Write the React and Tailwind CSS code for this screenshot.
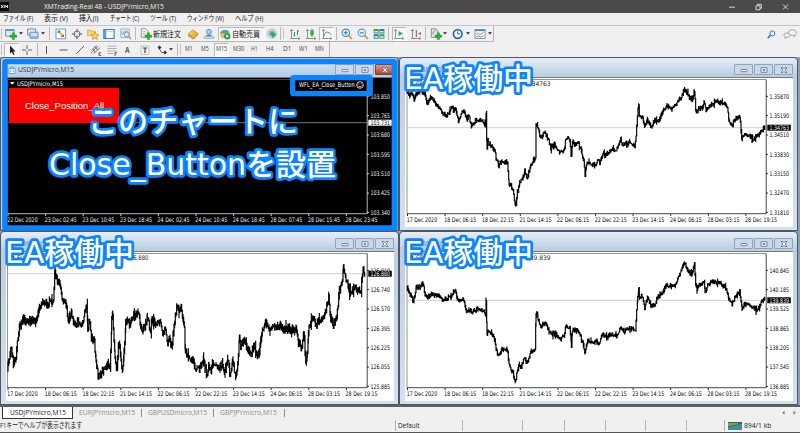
import { useLayoutEffect, useRef, useState } from 'react'

const MENUS = [
  ['ファイル (F)', 30],
  ['表示 (V)', 24],
  ['挿入(I)', 20],
  ['チャート (C)', 29],
  ['ツール (T)', 26],
  ['ウィンドウ (W)', 37],
  ['ヘルプ (H)', 28],
]

const TIMES = [
  '17 Dec 2020', '18 Dec 06:15', '18 Dec 22:15', '21 Dec 14:15', '22 Dec 06:15',
  '22 Dec 22:15', '23 Dec 14:15', '24 Dec 06:15', '28 Dec 03:15', '28 Dec 19:15',
]

const USD_TIMES = [
  '22 Dec 2020', '23 Dec 02:45', '23 Dec 10:45', '23 Dec 18:45', '24 Dec 02:45',
  '24 Dec 10:45', '24 Dec 18:45', '28 Dec 07:45', '28 Dec 15:45', '28 Dec 23:45',
]

/* price curves, in thirds of a pixel */
const GBPUSD = [
  [28,105],[35,118],[42,110],[48,130],[55,112],[65,105],[80,110],[87,145],[97,125],[105,130],[115,148],[125,155],
  [135,172],[150,178],[160,152],[167,165],[173,158],[181,195],[190,170],[200,165],[207,190],[212,175],[220,212],
  [230,195],[245,190],[262,205],[264,168],[266,255],[267,280],[269,250],[275,270],[290,280],[295,310],[302,330],[310,315],
  [328,318],[333,380],[345,400],[352,455],[358,410],[365,380],[375,365],[380,345],[388,370],[398,325],[412,305],
  [414,210],[417,203],[425,235],[430,245],[440,230],[450,250],[458,275],[470,265],[485,293],[500,275],[503,245],
  [515,250],[520,305],[523,255],[530,265],[540,258],[550,285],[557,310],[561,355],[567,320],[575,320],[590,328],
  [600,310],[605,320],[615,290],[625,297],[640,280],[655,282],[668,250],[675,270],[682,260],[690,265],[695,255],
  [710,272],[714,240],[718,180],[722,145],[724,185],[732,180],[740,215],[748,190],[760,213],[770,195],[780,195],
  [785,185],[795,165],[805,150],[820,157],[833,150],[843,130],[850,125],[858,100],[866,110],[875,125],[882,130],
  [889,105],[893,160],[898,170],[902,155],[912,158],[918,140],[925,165],[935,150],[955,137],[965,140],[980,140],
  [988,155],[993,195],[1002,212],[1010,190],[1025,180],[1031,248],[1040,238],[1050,238],[1065,248],[1080,238],
  [1090,225],[1101,212],
]

const GBPJPY = [
  [28,175],[38,195],[46,215],[50,195],[55,170],[65,172],[75,162],[82,195],[88,203],[100,193],[125,198],[133,208],
  [160,200],[170,180],[178,205],[182,213],[188,207],[195,207],[205,240],[218,240],[222,250],[228,240],[245,235],
  [262,250],[264,216],[266,270],[267,310],[275,305],[290,328],[294,355],[302,380],[310,360],[327,355],[333,400],
  [345,430],[352,455],[362,405],[370,410],[378,385],[388,398],[398,368],[411,355],[414,255],[417,245],[420,265],
  [428,290],[435,280],[445,285],[455,310],[475,313],[488,330],[498,315],[503,285],[515,295],[520,345],[523,300],
  [540,300],[550,325],[561,365],[567,335],[600,335],[604,342],[612,312],[630,320],[640,312],[655,318],[668,292],
  [678,305],[690,295],[712,298],[716,240],[719,205],[722,175],[724,205],[732,200],[740,232],[748,205],[758,225],
  [770,225],[778,205],[790,190],[805,165],[820,170],[835,160],[845,135],[852,115],[858,95],[868,120],[880,135],
  [889,105],[893,160],[897,178],[905,160],[912,165],[918,150],[921,188],[930,165],[943,155],[965,160],[985,175],
  [992,205],[1002,222],[1010,205],[1025,185],[1032,235],[1040,222],[1060,230],[1072,238],[1085,230],[1092,212],
  [1101,205],
]

const EURJPY = [
  [24,410],[30,370],[32,350],[40,400],[48,380],[52,340],[58,290],[72,268],[85,275],[95,272],[108,275],[118,235],
  [130,210],[140,220],[160,212],[165,120],[168,145],[180,160],[188,210],[200,225],[205,270],[214,245],[222,285],
  [230,275],[248,280],[260,220],[263,290],[270,280],[275,335],[283,335],[288,390],[295,440],[305,430],[318,405],
  [325,400],[330,410],[335,270],[338,250],[342,330],[345,380],[349,430],[357,330],[367,430],[372,370],[377,280],
  [382,270],[388,290],[395,260],[408,255],[414,240],[425,300],[435,295],[442,260],[450,305],[457,270],[467,280],
  [480,280],[490,305],[497,290],[503,350],[508,320],[515,350],[522,290],[530,225],[537,240],[545,235],[553,290],
  [556,370],[565,380],[575,385],[585,410],[598,415],[602,405],[611,385],[620,440],[627,400],[633,425],[640,395],
  [648,405],[658,415],[666,400],[673,430],[683,385],[690,435],[697,390],[707,442],[713,410],[718,325],[722,345],
  [735,335],[745,360],[755,370],[763,350],[770,375],[778,360],[783,325],[790,290],[797,280],[810,297],[825,295],
  [840,285],[850,300],[865,295],[880,300],[888,295],[895,335],[906,360],[911,300],[917,405],[922,370],[925,310],
  [932,275],[940,268],[948,285],[958,270],[972,260],[980,230],[986,200],[990,260],[1000,285],[1010,260],
  [1018,180],[1027,160],[1030,115],[1040,155],[1047,180],[1065,175],[1083,185],[1087,130],[1090,115],[1096,140],
]

/* one high-low bar every two units, with repeatable jitter */
function bars(points, amp, shift) {
  let seed = 7
  const rnd = () => {
    seed = (seed * 16807) % 2147483647
    return seed / 2147483647
  }
  let d = ''
  let prev = points[0][1]
  for (let i = 0; i < points.length - 1; i++) {
    const [x0, y0] = points[i]
    const [x1, y1] = points[i + 1]
    for (let x = x0; x < x1; x += 2) {
      const y = y0 + ((y1 - y0) * (x - x0)) / (x1 - x0) + (rnd() - 0.5) * amp
      const spike = rnd() > 0.9 ? amp * 0.8 : 0
      const hi = Math.min(prev, y) - rnd() * amp * 0.6 - spike * rnd()
      const lo = Math.max(prev, y) + rnd() * amp * 0.6 + spike * rnd()
      d += `M${(x / 3 + shift).toFixed(2)} ${(hi / 3 - 1).toFixed(2)}V${(lo / 3 - 1).toFixed(2)}`
      prev = y
    }
  }
  return d
}

/* ── Text squeezed to a fixed width ── */

function Fit({ w, className = '', children }) {
  const ref = useRef(null)
  const [scale, setScale] = useState(1)

  useLayoutEffect(() => {
    setScale(w / ref.current.offsetWidth)
  }, [w])

  return (
    <span className={`block shrink-0 whitespace-nowrap leading-none ${className}`} style={{ width: w }}>
      <span ref={ref} className="inline-block origin-left" style={{ transform: `scaleX(${scale})` }}>
        {children}
      </span>
    </span>
  )
}

/* ── Toolbar parts ── */

function Icon({ children, className = '' }) {
  return (
    <svg viewBox="0 0 12 12" className={`h-3 w-3 shrink-0 ${className}`} fill="none">
      {children}
    </svg>
  )
}

function Caret({ className = '' }) {
  return (
    <svg viewBox="0 0 4 3" className={`h-[3px] w-1 shrink-0 ${className}`}>
      <path d="M0 .3h4L2 2.6z" fill="#222" />
    </svg>
  )
}

function Sep({ className = '' }) {
  return <div className={`h-[13px] w-px shrink-0 bg-[#b9b9b9] ${className}`} />
}

function Plus() {
  return <path d="M7.3 4.8h2.2v2.3h2.3v2.2H9.5v2.3H7.3V9.3H5V7.1h2.3z" fill="#22b62c" stroke="#0e8a1c" strokeWidth=".4" />
}

function Axes() {
  return <path d="M2.5 1.5v9h8M1 3l1.5-1.6L4 3M9.2 9l1.6 1.5L9.2 12M1 10.5h1.5" stroke="#777" strokeWidth=".8" />
}

function MainToolbar() {
  return (
    <div className="flex h-[17px] shrink-0 items-center border-t border-[#c4c4c4]">
      <div className="flex h-full w-[494px] items-center border-r border-b border-[#b5b5b5]">
        <div className="ml-px h-[11px] w-px bg-[#c2c2c2]" />
        <Icon className="ml-[3px]">
          <path d="M.6 1.6h8.6v6.6H.6z" fill="#dcebf8" stroke="#5d8fc0" strokeWidth=".9" />
          <path d="M.6 2.2h8.6" stroke="#4c86c4" strokeWidth="1.2" />
          <Plus />
        </Icon>
        <Caret className="ml-[2px]" />
        <Icon className="ml-[4px]">
          <path d="M.7 1h8v6h-8z" fill="#e9f2fa" stroke="#5d8fc0" />
          <path d="M3 4.2h8v6H3z" fill="#cfe2f4" stroke="#5d8fc0" />
          <path d="M3.5 8.2h7v1.6h-7z" fill="#7fadda" />
        </Icon>
        <Caret className="ml-[2px]" />
        <Sep className="ml-[4px]" />
        <Icon className="ml-[5px]">
          <path d="M1 1h9.6v9.8H1z" fill="#fff" stroke="#6fa3cf" strokeWidth="1.1" />
          <path d="M2.7 2.6h2.6v2.6H2.7z" fill="#28a548" />
          <path d="M5 5h2v1.6H5z" fill="#e2a93a" />
          <path d="M6.4 6.5H9v2.6H6.4z" fill="#e2522b" />
        </Icon>
        <Icon className="ml-[4px]">
          <circle cx="6" cy="6" r="3.1" stroke="#666" strokeWidth=".9" />
          <path d="M6 .8v3.7M6 7.5v3.7M.8 6h3.7M7.5 6h3.7" stroke="#555" strokeWidth=".9" />
        </Icon>
        <Icon className="ml-[4px]">
          <path d="M.6 2h3l1 1.2h3.6v4.6H.6z" fill="#f6d575" stroke="#d2a23b" strokeWidth=".7" />
          <path d="M8 4l1.2 2.5 2.7.3-2 1.9.5 2.8L8 10.2l-2.5 1.3.5-2.8-2-1.9 2.7-.3z" fill="#f8cf5c" stroke="#c8922a" strokeWidth=".7" />
        </Icon>
        <Icon className="ml-[4px]">
          <path d="M.8 1.5h10.3v9H.8z" fill="#f5fafe" stroke="#3f7fbf" strokeWidth="1.1" />
          <path d="M1.2 2h2v8h-2z" fill="#4f93d3" />
          <path d="M4.2 3.5h6" stroke="#b7cfe6" strokeWidth=".8" />
        </Icon>
        <Icon className="ml-[5px]">
          <path d="M.7 1h8.6v8.6H.7z" fill="#e6eef6" stroke="#8aabc9" strokeWidth=".8" />
          <path d="M2 7V3.5M3.7 6V3M5.5 5V2.5M7.2 5V2.5" stroke="#7e9fc0" strokeWidth=".8" />
          <circle cx="6.7" cy="6.5" r="2.5" fill="#d5e8f8" stroke="#5b94c8" strokeWidth=".9" />
          <path d="M8.5 8.4l2.7 2.6" stroke="#d39a4b" strokeWidth="1.5" />
        </Icon>
        <Sep className="ml-[3px]" />
        <Icon className="ml-[4px]">
          <path d="M1.3.8h4.5l2 2v6.5H1.3z" fill="#f4f4f4" stroke="#888" strokeWidth=".8" />
          <path d="M2.6 3.5h3M2.6 5.2h3M2.6 7h2" stroke="#999" strokeWidth=".6" />
          <Plus />
        </Icon>
        <Fit w={28} className="ml-px text-[8px] text-[#111]">新規注文</Fit>
        <Icon className="ml-[6px]">
          <path d="M1 6.5L5.6 2l5.6 3.5-4.800 4.8z" fill="#f0b93c" stroke="#b97a17" strokeWidth=".7" />
          <path d="M1 6.5v1.6l5.4 3.3 4.8-4.500V5.5l-4.800 4.8z" fill="#c78a24" />
          <path d="M3.2 6l2.6-2.400" stroke="#fbe6a2" strokeWidth="1" />
        </Icon>
        <Icon className="ml-[4px]">
          <circle cx="6" cy="3.8" r="2.5" fill="#a9d2f4" stroke="#3d88cd" strokeWidth=".8" />
          <path d="M2.5 8.5C3.5 5.8 8.5 5.8 9.5 8.5" fill="#3d88cd" />
          <path d="M1 10.3c0-3 3-2 5-2s5-1 5 2z" fill="#cfe0ee" stroke="#7d9cb8" strokeWidth=".7" />
        </Icon>
        <div className="ml-[3px] flex h-[14px] w-[47px] items-center border border-[#b9b9b9] border-r-white border-b-white bg-[#f7f7f7]">
          <Icon>
            <path d="M1 5c1.5-4 8-4.500 9.5-.5L6 6z" fill="#4a9bd8" />
            <path d="M1.2 5.2h8L8 9.5 3 9.8z" fill="#f0c24b" stroke="#b98b25" strokeWidth=".5" />
            <circle cx="8.3" cy="8.3" r="3.2" fill="#21a33a" />
            <path d="M7.3 6.6v3.4l2.8-1.700z" fill="#fff" />
          </Icon>
          <Fit w={28} className="ml-px text-[8px] text-[#111]">自動売買</Fit>
        </div>
        <Icon className="ml-[1px]">
          <circle cx="6" cy="5.5" r="4.6" fill="#c9d6de" stroke="#9bb4c4" strokeWidth=".7" />
          <circle cx="6" cy="5.5" r="2.6" fill="#5f9cc0" />
          <path d="M5.5 4.5l5 1.5-4 4.6z" fill="#36a85c" />
        </Icon>
        <Sep className="ml-[2px]" />
        <div className="ml-[2px] h-[11px] w-px bg-[#c2c2c2]" />
        <Icon className="ml-[5px]">
          <Axes />
          <path d="M5.5 4v4.5M8.5 2v5M5.5 7.5h-1M8.5 3h1.5" stroke="#2da044" strokeWidth="1" />
        </Icon>
        <Icon className="ml-[4px]">
          <Axes />
          <path d="M7 .8v8.2" stroke="#2da044" />
          <path d="M5.3 2.3h3.4v5H5.3z" fill="#27b53f" />
        </Icon>
        <div className="ml-[2px] flex h-[14px] w-[15px] items-center border border-[#b9b9b9] border-r-white border-b-white bg-[#f7f7f7] pl-px">
          <Icon>
            <Axes />
            <path d="M3 8c1-5 4-5 7.5-1" stroke="#4c9a55" strokeWidth="1" />
          </Icon>
        </div>
        <Sep className="ml-[2px]" />
        <Icon className="ml-[4px]">
          <path d="M7.3 7.3l3.7 3.7" stroke="#dba73e" strokeWidth="2" />
          <circle cx="4.8" cy="4.8" r="3.7" fill="#e4f1fb" stroke="#3e8bd0" strokeWidth="1.1" />
          <path d="M2.9 4.8h3.8M4.8 2.9v3.8" stroke="#2c78c0" strokeWidth="1.1" />
        </Icon>
        <Icon className="ml-[4px]">
          <path d="M7.3 7.3l3.7 3.7" stroke="#dba73e" strokeWidth="2" />
          <circle cx="4.8" cy="4.8" r="3.7" fill="#e4f1fb" stroke="#5f9fd6" strokeWidth="1.1" />
          <path d="M2.9 4.8h3.8" stroke="#2c78c0" strokeWidth="1.1" />
        </Icon>
        <Icon className="ml-[4px]">
          <path d="M.7 1h5v4.5h-5zM6.4 6.2h5v4.6h-5z" fill="#3aa342" />
          <path d="M6.4 1h5v4.5h-5zM.7 6.2h5v4.6h-5z" fill="#2d78c6" />
          <path d="M1.5 3h3.4v1.5H1.500zM7.2 3h3.4v1.5H7.200zM1.5 8.2h3.4v1.5H1.500zM7.2 8.2h3.4v1.5H7.200z" fill="#e8f6e4" />
        </Icon>
        <Sep className="ml-[3px]" />
        <div className="ml-[3px] flex h-[14px] w-[15px] items-center border border-[#b9b9b9] border-r-white border-b-white bg-[#f7f7f7]">
          <Icon>
            <Axes />
            <path d="M5.5 3v5l4.5-2.500z" fill="#27b53f" />
          </Icon>
        </div>
        <Icon className="ml-[3px]">
          <Axes />
          <path d="M6.3 2v7" stroke="#666" />
          <path d="M11 4v3L7.8 5.5z" fill="#d9562c" />
        </Icon>
        <Sep className="ml-[3px]" />
        <Icon className="ml-[4px]">
          <path d="M1.3.8h4.5l2 2v6.5H1.3z" fill="#e8e8e8" stroke="#777" strokeWidth=".8" />
          <path d="M3 6.5C3.3 3 4.5 2.5 5.5 3" stroke="#555" strokeWidth=".7" />
          <Plus />
        </Icon>
        <Caret className="ml-px" />
        <Icon className="ml-[5px]">
          <circle cx="5.7" cy="6" r="4.3" fill="#f4f9fd" stroke="#2170bd" strokeWidth="1.7" />
          <path d="M5.7 3.5V6h2" stroke="#444" strokeWidth=".9" />
        </Icon>
        <Caret className="ml-[2px]" />
        <Icon className="ml-[4px]">
          <path d="M.9 1.5h10.3v9H.9z" fill="#f0f5fa" stroke="#6e97bd" strokeWidth=".9" />
          <path d="M1 2.4h10" stroke="#4a86c0" strokeWidth="1.4" />
          <path d="M2 6.5l2-1.500 2 1.5 3.500-2" stroke="#c2703c" strokeWidth=".8" />
          <path d="M2 9l2.5-1.200L6.5 9l3-1.500" stroke="#3b9a48" strokeWidth=".8" />
        </Icon>
        <Caret className="ml-[2px]" />
      </div>
      <div className="ml-auto flex items-center gap-1 pr-[3px]">
        <svg viewBox="0 0 9 9" className="h-[9px] w-[9px]" fill="none">
          <circle cx="5.4" cy="3.4" r="2.5" stroke="#2f7fd3" strokeWidth="1" fill="#e6f1fc" />
          <path d="M3.6 5.2L.8 8" stroke="#1c62c0" strokeWidth="1.5" />
        </svg>
        <svg viewBox="0 0 14 10" className="ml-[3px] h-[10px] w-[14px]" fill="#f2f2f2" stroke="#8b8f98" strokeWidth=".8">
          <path d="M9.3.8c2.3 0 4 1 4 2.7s-1.100 2.3-1.700 2.5l.4 1.7-2-1.400C7 6.5 5.4 5 5.4 3.5S7 .8 9.3.8z" />
          <path d="M4 4c1.7 0 3 .8 3 2S5.7 8.2 4 8.2L2 9.4l.2-1.600C1.3 7.4.8 6.8.8 6 .8 4.8 2.3 4 4 4z" />
        </svg>
      </div>
    </div>
  )
}

function DrawToolbar() {
  return (
    <div className="flex h-[15px] shrink-0 items-center">
      <div className="flex h-full w-[330px] items-center border-r border-[#b5b5b5] text-[6.5px] text-[#444]">
        <div className="ml-px h-[11px] w-px bg-[#c2c2c2]" />
        <div className="ml-[2px] flex h-[14px] w-[15px] items-center justify-center border border-[#b9b9b9] border-r-white border-b-white bg-[#f7f7f7]">
          <Icon>
            <path d="M4 1.5v8L5.9 8l1.3 3 1.3-.6L7.2 7.5h2.4z" fill="#222" />
          </Icon>
        </div>
        <Icon className="ml-[2px]">
          <path d="M6 1v4M6 7v4M1 6h4M7 6h4" stroke="#555" strokeWidth=".9" />
        </Icon>
        <Sep className="ml-[4px]" />
        <Icon className="ml-[3px]"><path d="M5.5 2v8" stroke="#555" /></Icon>
        <Icon className="ml-[5px]"><path d="M1.5 6h8" stroke="#555" /></Icon>
        <Icon className="ml-[4px]"><path d="M2 10l8-8" stroke="#555" strokeWidth=".9" /></Icon>
        <Icon className="ml-[4px]">
          <path d="M1 9l7-7M3.5 10l6.5-6.500M1.5 6l5-4.500M3 5l2 3M5.5 3l2 3" stroke="#555" strokeWidth=".8" />
          <path d="M11 8.5H9v3h2M9 10h1.5" stroke="#444" strokeWidth=".7" />
        </Icon>
        <Icon className="ml-[4px]">
          <path d="M1.5 2h9M1.5 4.5h9M1.5 7h9M1.5 9.5h6" stroke="#999" strokeWidth=".8" />
          <path d="M9 12V8.5h2M9 10h1.5" stroke="#444" strokeWidth=".7" />
        </Icon>
        <Fit w={5} className="ml-[7px] text-[8px] font-bold text-[#555]">A</Fit>
        <Icon className="ml-[9px]">
          <path d="M2 2h8v8.5H2z" stroke="#999" strokeWidth=".8" strokeDasharray="1 .7" />
          <path d="M4 4h4M6 4v5" stroke="#444" strokeWidth="1.2" />
        </Icon>
        <Icon className="ml-[5px]">
          <path d="M1.5 3.5l2-2 2 2-2 2zM7 8.5l2-2 2 2-2 2z" fill="#333" />
          <path d="M3.5 5l2 3.5h2" stroke="#555" strokeWidth=".9" />
        </Icon>
        <Caret className="ml-[1px]" />
        <Sep className="ml-[4px]" />
        <div className="ml-[2px] h-[11px] w-px bg-[#c2c2c2]" />
        <Fit w={8} className="ml-[4px]">M1</Fit>
        <Fit w={8} className="ml-[8px]">M5</Fit>
        <div className="ml-[5px] flex h-[14px] w-[15px] items-center justify-center border border-[#b9b9b9] border-r-white border-b-white bg-[#f8f8f8]">
          <Fit w={11}>M15</Fit>
        </div>
        <Fit w={11} className="ml-[4px]">M30</Fit>
        <Fit w={7} className="ml-[7px]">H1</Fit>
        <Fit w={8} className="ml-[8px]">H4</Fit>
        <Fit w={8} className="ml-[9px]">D1</Fit>
        <Fit w={9} className="ml-[8px]">W1</Fit>
        <Fit w={9} className="ml-[7px]">MN</Fit>
      </div>
    </div>
  )
}

/* ── Chart windows ── */

function Chart({ symbol, times, prices, current, currentY, curve, amp, shift = 0, dark }) {
  const fg = dark ? '#fff' : '#000'
  const bg = dark ? '#000' : '#fff'
  const x0 = shift ? 8 : 7.5

  return (
    <svg viewBox="6 20 388 150" className="h-[150px] w-[388px] shrink-0" fontSize="6.3" fontFamily="'DejaVu Sans Condensed','DejaVu Sans',sans-serif">
      <rect x="6" y="20" width="388" height="150" fill={bg} />
      <path d="M6 20.500H394" stroke="#777" />
      <path d={`M${x0} 157V22.5H367`} stroke={dark ? '#555' : '#777'} strokeWidth=".8" fill="none" />
      <path d={`M${x0} 156.7H367.2V22.5`} stroke={dark ? '#ccc' : '#333'} strokeWidth=".9" fill="none" />
      <path d={`M${x0} ${currentY}H367`} stroke={dark ? '#70777d' : '#cfcfcf'} strokeWidth="1" />
      {curve && <path d={bars(curve, amp, shift)} stroke="#000" strokeWidth="1.15" />}

      <path d="M10 25h4.500l-2.250 2.800z" fill={fg} />
      <text x="17" y="29" textLength="46" lengthAdjust="spacingAndGlyphs" fill={fg}>{symbol}</text>
      {!dark && (
        <text x={shift ? 127 : 126.5} y="29" textLength={shift ? 24.5 : 22} lengthAdjust="spacingAndGlyphs" fill="#222">{current}</text>
      )}

      {prices.map((p, i) => (
        <g key={p}>
          <path d={`M367 ${39.3 + i * 19.35}h2`} stroke={fg} strokeWidth=".8" />
          <text x="370.5" y={41.6 + i * 19.35} textLength="19.5" lengthAdjust="spacingAndGlyphs" fill={dark ? '#f0f0f0' : '#000'}>{p}</text>
        </g>
      ))}
      <rect x="368.3" y={currentY - 3} width="23.5" height="6" fill={fg} />
      <text x="370.5" y={currentY + 2.2} textLength="19.5" lengthAdjust="spacingAndGlyphs" fill={bg}>{current}</text>

      {times.map((t, i) => (
        <g key={t}>
          <path d={`M${x0 + 0.5 + i * 37.6} 157v2`} stroke={fg} strokeWidth=".8" />
          <text x={x0 - 0.3 + i * 37.6} y="164.6" textLength={i ? 32 : 30.5} lengthAdjust="spacingAndGlyphs" fill={dark ? '#f0f0f0' : '#000'}>{t}</text>
        </g>
      ))}
    </svg>
  )
}

function WindowButton({ kind, active }) {
  const close = kind === 'close'
  return (
    <div
      className={
        'flex h-[11px] w-[19px] items-center justify-center rounded-[1px] border ' +
        (close && active ? 'border-[#7a4038] bg-linear-to-b from-[#dc9a8c] to-[#bb3a27]' : 'border-[#8fa5bd] bg-[#c9d9e9]')
      }
    >
      <svg viewBox="0 0 8 6" className="h-[6px] w-2" fill="#fff" stroke="#687789" strokeWidth=".9">
        {kind === 'min' && <rect x="1" y="2.5" width="6" height="2.2" rx=".6" />}
        {kind === 'max' && <path d="M1 .7h6v4.6H1zM3 2.5h2v1.2H3z" />}
        {close && <path d="M1 .5h1.9L4 1.8 5.1.5H7L5.1 3 7 5.5H5.1L4 4.2 2.9 5.5H1L2.9 3z" />}
      </svg>
    </div>
  )
}

function ChartWindow({ title, active, children }) {
  return (
    <div
      className={
        'flex h-[174px] w-[399px] flex-col rounded-t-[4px] border border-[#4f565e] pl-[5px] ' +
        (active
          ? 'bg-linear-to-b from-[#dbe8f5] via-[#b4cde8] via-10% to-[#b9d1ea] shadow-[inset_-1px_-1px_0_#35b4ee]'
          : 'bg-linear-to-b from-[#e6eef6] via-[#bccfe2] via-10% to-[#d3e1ef]')
      }
    >
      <div className="flex h-[19px] shrink-0 items-center pr-[4px]">
        <svg viewBox="0 0 8 8" className="mt-[4px] ml-[2px] h-2 w-2" fill="none">
          <path d="M.8 2.5h6.4v5H.8z" fill="#e9f4fc" stroke="#5b9bd0" strokeWidth=".8" />
          <path d="M2.3 2.5V1h3.4v1.5M2.5 4.5v1.5M5.2 4v2" stroke="#5b9bd0" strokeWidth=".8" />
        </svg>
        <Fit w={56} className={active ? 'mt-[2px] ml-[2px] text-[8px] text-[#333]' : 'mt-[2px] ml-[2px] text-[8px] text-[#71808f]'}>
          {title}
        </Fit>
        <div className="mt-[4px] ml-auto flex gap-px">
          <WindowButton kind="min" active={active} />
          <WindowButton kind="max" active={active} />
          <WindowButton kind="close" active={active} />
        </div>
      </div>
      {children}
    </div>
  )
}

/* ── Labels drawn over the charts ── */

function Callout({ x, y, length, children }) {
  return (
    <text
      x={x}
      y={y}
      textLength={length}
      lengthAdjust="spacingAndGlyphs"
      fill="#fff"
      stroke="#0a84ff"
      strokeWidth="5.5"
      strokeLinejoin="round"
      paintOrder="stroke"
    >
      {children}
    </text>
  )
}

function Annotations() {
  return (
    <svg
      viewBox="0 0 800 433"
      className="pointer-events-none absolute inset-0 h-[433px] w-[800px]"
      fill="none"
      fontSize="30"
      fontWeight="500"
      fontFamily="'DejaVu Sans','Noto Sans CJK JP',sans-serif"
    >
      <rect x="4.9" y="61.5" width="389.5" height="166.5" rx="1" stroke="#0a84ff" strokeWidth="5.5" />
      <rect x="292.7" y="77.7" width="77.5" height="16" rx="1" stroke="#0a84ff" strokeWidth="5.3" />
      <Callout x="88" y="132" length="210">このチャートに</Callout>
      <Callout x="49" y="175" length="287">Close_Buttonを設置</Callout>
      <Callout x="404" y="88.5" length="129">EA稼働中</Callout>
      <Callout x="5" y="262.5" length="129">EA稼働中</Callout>
      <Callout x="404" y="262.5" length="129">EA稼働中</Callout>
    </svg>
  )
}

function StatusCell({ className = '', children }) {
  return <div className={`flex h-[11px] shrink-0 items-center border-l border-[#b4b4b4] ${className}`}>{children}</div>
}

export default function App() {
  return (
    <div className="relative flex h-[433px] w-[800px] flex-col overflow-hidden bg-[#f0f0f0] font-['Open_Sans','Noto_Sans_CJK_JP',sans-serif]">
      {/* title bar */}
      <div className="flex h-[13px] shrink-0 items-center bg-[#4b4a48] text-[7.5px] text-[#f0f0f0]">
        <svg viewBox="0 0 9 9" className="h-[9px] w-[9px]">
          <rect width="9" height="9" fill="#0a0a0a" />
          <path d="M1 3l2.5 3M3.5 3L1 6M4.8 6V3.2L6.2 5l1.4-1.800V6" stroke="#fff" strokeWidth=".9" fill="none" />
        </svg>
        <Fit w={120} className="ml-[35px]">XMTrading-Real 48 - USDJPYmicro,M15</Fit>
        <svg viewBox="0 0 62 8" className="mr-[10px] ml-auto h-2 w-[62px]" fill="none" stroke="#e4e4e4" strokeWidth=".9">
          <path d="M1 4.2h6M28 2.8h4v4h-4zM29.3 2.5V1.3h4v4h-1.200M55 1.5l5 5M60 1.5l-5 5" />
        </svg>
      </div>

      {/* menu */}
      <div className="flex h-[12px] shrink-0 items-center gap-[11px] pl-[3px] text-[7.5px] text-[#111]">
        {MENUS.map(([label, w]) => (
          <Fit key={label} w={w}>{label}</Fit>
        ))}
      </div>

      <MainToolbar />
      <DrawToolbar />

      {/* workspace */}
      <div className="grid h-[348px] shrink-0 grid-cols-[399px_399px] content-start bg-[#8ba0b5]">
        <ChartWindow title="USDJPYmicro,M15" active>
          <div className="relative h-[150px] w-[388px]">
            <Chart
              dark
              symbol="USDJPYmicro,M15"
              times={USD_TIMES}
              prices={['103.850', '103.765', '103.680', '103.595', '103.510', '103.425', '103.340']}
              current="103.731"
              currentY={65.7}
            />
            <div className="absolute top-[11px] left-[3px] flex h-[35px] w-[110px] items-center bg-[#ff0000] pl-[16px] font-['Liberation_Sans',sans-serif] text-[9.5px] text-white">
              <Fit w={87}>Close_Position_All...</Fit>
            </div>
            <div className="absolute top-[3px] left-[293px] flex h-[10px] items-center gap-px font-['DejaVu_Sans',sans-serif] text-[6.5px] text-white">
              <Fit w={56}>WFL_EA_Close_Button</Fit>
              <svg viewBox="0 0 8 8" className="h-2 w-2" fill="none" stroke="#fff" strokeWidth=".8">
                <circle cx="4" cy="4" r="3.3" />
                <path d="M2.2 4.7c.7 1.5 2.9 1.5 3.6 0M2.8 2.5v1M5.2 2.5v1" />
              </svg>
            </div>
          </div>
        </ChartWindow>
        <ChartWindow title="GBPUSDmicro,M15">
          <Chart
            symbol="GBPUSDmicro,M15"
            times={TIMES}
            prices={['1.35870', '1.35190', '1.34510', '1.33830', '1.33150', '1.32470', '1.31810']}
            current="1.34763"
            currentY={70.7}
            curve={GBPUSD}
            amp={10}
            shift={-1}
          />
        </ChartWindow>
        <ChartWindow title="EURJPYmicro,M15">
          <Chart
            symbol="EURJPYmicro,M15"
            times={TIMES}
            prices={['126.910', '126.740', '126.570', '126.395', '126.225', '126.055', '125.885']}
            current="126.880"
            currentY={42.7}
            curve={EURJPY}
            amp={18}
          />
        </ChartWindow>
        <ChartWindow title="GBPJPYmicro,M15">
          <Chart
            symbol="GBPJPYmicro,M15"
            times={TIMES}
            prices={['140.845', '140.185', '139.525', '138.865', '138.205', '137.545', '136.885']}
            current="139.839"
            currentY={69.3}
            curve={GBPJPY}
            amp={10}
            shift={-1}
          />
        </ChartWindow>
      </div>

      {/* chart tabs */}
      <div className="flex h-[14px] shrink-0 items-start border-t-2 border-[#5f5f5f] text-[7.5px] text-[#8c8c8c]">
        <div className="ml-[2px] flex h-[12px] w-[71px] items-center border-r border-b border-l border-[#333] bg-white pl-[7px] text-[#222]">
          <Fit w={56}>USDJPYmicro,M15</Fit>
        </div>
        <div className="flex h-[12px] items-center pl-[6px]">
          <Fit w={56}>EURJPYmicro,M15</Fit>
          <div className="ml-[6px] h-2 w-px bg-[#8c8c8c]" />
          <Fit w={59} className="ml-[6px]">GBPUSDmicro,M15</Fit>
          <div className="ml-[6px] h-2 w-px bg-[#8c8c8c]" />
          <Fit w={57} className="ml-[6px]">GBPJPYmicro,M15</Fit>
          <div className="ml-[7px] h-2 w-px bg-[#8c8c8c]" />
        </div>
        <svg viewBox="0 0 16 6" className="mt-[3px] mr-[3px] ml-auto h-[6px] w-4" fill="#777">
          <path d="M3.5.8v4L1.2 2.8zM12.5.8v4l2.3-2z" />
        </svg>
      </div>

      {/* status bar */}
      <div className="flex h-[13px] shrink-0 items-center text-[7.5px] text-[#222]">
        <div className="w-[395px] shrink-0">
          <Fit w={82}>F1キーでヘルプが表示されます</Fit>
        </div>
        <StatusCell className="w-[67px] pl-[2px]">
          <Fit w={22}>Default</Fit>
        </StatusCell>
        <StatusCell className="w-[60px]" />
        <StatusCell className="w-[42px]" />
        <StatusCell className="w-[41px]" />
        <StatusCell className="w-[40px]" />
        <StatusCell className="w-[41px]" />
        <StatusCell className="w-[38px]" />
        <StatusCell className="gap-[2px] pl-[3px]">
          <svg viewBox="0 0 14 8" className="h-2 w-[14px]">
            <rect width="14" height="8" fill="#2f6b5a" />
            <path d="M1 8V5M3 8V4.5M5 8V4M7 8V3.5M9 8V3M11 8V2.5M13 8V2" stroke="#5aa0d8" strokeWidth="1.2" />
            <path d="M1 4V1M3 3.5V1M5 3V1M7 2.8V1M9 2.5V1" stroke="#c9c44c" strokeWidth="1.2" />
          </svg>
          <Fit w={27}>894/1 kb</Fit>
        </StatusCell>
      </div>
      <div className="h-px shrink-0 bg-[#555]" />

      <Annotations />
    </div>
  )
}
